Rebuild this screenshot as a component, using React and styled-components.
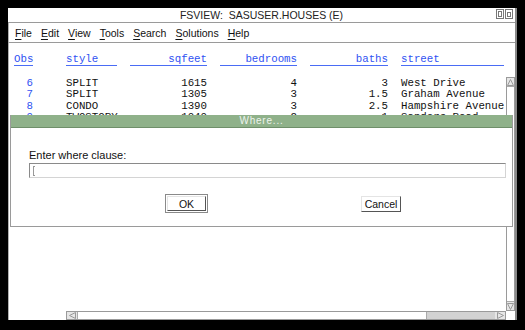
import styled, { createGlobalStyle } from 'styled-components';

const GlobalStyle = createGlobalStyle`
  html, body {
    margin: 0;
    padding: 0;
    background: #000;
  }
  * {
    box-sizing: border-box;
  }
`;

const columns = [
  { key: 'obs', label: 'Obs', align: 'right' },
  { key: 'style', label: 'style', align: 'left' },
  { key: 'sqfeet', label: 'sqfeet', align: 'right' },
  { key: 'bedrooms', label: 'bedrooms', align: 'right' },
  { key: 'baths', label: 'baths', align: 'right' },
  { key: 'street', label: 'street', align: 'left' },
];

const rows = [
  { obs: 6, style: 'SPLIT', sqfeet: 1615, bedrooms: 4, baths: '3', street: 'West Drive' },
  { obs: 7, style: 'SPLIT', sqfeet: 1305, bedrooms: 3, baths: '1.5', street: 'Graham Avenue' },
  { obs: 8, style: 'CONDO', sqfeet: 1390, bedrooms: 3, baths: '2.5', street: 'Hampshire Avenue' },
  { obs: 9, style: 'TWOSTORY', sqfeet: 1040, bedrooms: 2, baths: '1', street: 'Sanders Road' },
];

const menus = ['File', 'Edit', 'View', 'Tools', 'Search', 'Solutions', 'Help'];

const App = () => {
  return (
    <>
      <GlobalStyle />
      <Window>
        <TitleBar>
          <span />
          <TitleText>FSVIEW:&nbsp;&nbsp;SASUSER.HOUSES (E)</TitleText>
          <WinIcons>
            <svg width="17" height="10" viewBox="0 0 17 10">
              <rect x="0.5" y="0.5" width="7" height="9" fill="#fff" stroke="#777" />
              <rect x="2.5" y="2.5" width="3" height="5" fill="none" stroke="#777" />
              <rect x="9.5" y="0.5" width="7" height="9" fill="#fff" stroke="#777" />
              <rect x="11.5" y="3.5" width="3" height="4" fill="none" stroke="#777" />
            </svg>
          </WinIcons>
        </TitleBar>

        <MenuBar>
          {menus.map((m) => (
            <MenuItem key={m}>
              <u>{m[0]}</u>
              {m.slice(1)}
            </MenuItem>
          ))}
        </MenuBar>

        <Body>
          <Table>
            {columns.map((c) => (
              <HeadCell key={c.key} $align={c.align} $narrow={c.key === 'obs'}>
                {c.label}
              </HeadCell>
            ))}
            {rows.map((r) =>
              columns.map((c) => (
                <Cell
                  key={r.obs + c.key}
                  $align={c.align}
                  $narrow={c.key === 'obs'}
                  $blue={c.key === 'obs'}
                >
                  {r[c.key]}
                </Cell>
              ))
            )}
          </Table>

          <VScroll>
            <ArrowBox $side="top">
              <svg width="7" height="7" viewBox="0 0 7 7">
                <path d="M3.5 0.5 L6.5 6.5 L0.5 6.5 Z" fill="none" stroke="#999" />
              </svg>
            </ArrowBox>
            <ArrowBox $side="bottom">
              <svg width="7" height="7" viewBox="0 0 7 7">
                <path d="M0.5 0.5 L6.5 0.5 L3.5 6.5 Z" fill="none" stroke="#999" />
              </svg>
            </ArrowBox>
          </VScroll>

          <HScroll>
            <HArrow>
              <svg width="7" height="7" viewBox="0 0 7 7">
                <path d="M6.5 0.5 L6.5 6.5 L0.5 3.5 Z" fill="none" stroke="#999" />
              </svg>
            </HArrow>
            <Thumb />
            <Track />
            <HArrow>
              <svg width="7" height="7" viewBox="0 0 7 7">
                <path d="M0.5 0.5 L0.5 6.5 L6.5 3.5 Z" fill="none" stroke="#999" />
              </svg>
            </HArrow>
          </HScroll>
          <Corner />
        </Body>

        <Dialog>
          <DialogTitle>Where...</DialogTitle>
          <DialogBody>
            <Label>Enter where clause:</Label>
            <Input>
              <Caret />
            </Input>
            <ButtonRow>
              <DefaultFrame>
                <Button $w={39} $h={15}>OK</Button>
              </DefaultFrame>
              <Button $w={40} $h={16}>Cancel</Button>
            </ButtonRow>
          </DialogBody>
        </Dialog>
      </Window>
    </>
  );
};

export default App;

const Window = styled.div`
  position: relative;
  margin: 8px 0 0 8px;
  width: 509px;
  height: 312px;
  background: #fff;
  border-right: 2px solid #8a8a8a;
  display: flex;
  flex-direction: column;
  font-family: 'Liberation Sans', Arial, sans-serif;
  color: #111;
`;

const TitleBar = styled.div`
  height: 15px;
  border-bottom: 1px solid #9a9a9a;
  display: grid;
  grid-template-columns: 1fr auto 1fr;
  align-items: center;
  font-size: 10.5px;
`;

const TitleText = styled.span`
  color: #222;
  white-space: nowrap;
`;

const WinIcons = styled.span`
  justify-self: end;
  display: flex;
  padding-right: 2px;
  margin-top: -3px;
`;

const MenuBar = styled.div`
  height: 20px;
  border-bottom: 1px solid #9a9a9a;
  border-left: 1px solid #b0b0b0;
  display: flex;
  align-items: center;
  gap: 9px;
  padding-left: 6px;
  font-size: 10.5px;
`;

const MenuItem = styled.span`
  color: #111;
  u {
    text-underline-offset: 2px;
  }
`;

const Body = styled.div`
  flex: 1;
  display: grid;
  grid-template-columns: 1fr 9px;
  grid-template-rows: 1fr 9px;
  border-left: 1px solid #b0b0b0;
  min-height: 0;
`;

const Table = styled.div`
  display: grid;
  grid-template-columns: 39px 51px 77px 77px 78px 103px;
  grid-auto-rows: 11.5px;
  column-gap: 13px;
  align-content: start;
  padding: 11px 0 0 5px;
  font-family: 'Liberation Mono', 'Courier New', monospace;
  font-size: 10.75px;
  line-height: 11.5px;
  overflow: hidden;
`;

const HeadCell = styled.div`
  color: #2f52f2;
  text-align: ${(p) => p.$align};
  border-bottom: 1px solid #4a6cf5;
  height: 12px;
  width: ${(p) => (p.$narrow ? '19px' : 'auto')};
  white-space: nowrap;
`;

const Cell = styled.div`
  color: ${(p) => (p.$blue ? '#2f52f2' : '#111')};
  text-align: ${(p) => p.$align};
  width: ${(p) => (p.$narrow ? '19px' : 'auto')};
  white-space: nowrap;
  margin-top: 12px;
  margin-bottom: -12px;
`;

const VScroll = styled.div`
  grid-column: 2;
  grid-row: 1;
  margin-top: 34px;
  border: 1px solid #9a9a9a;
  background: #fff;
  display: flex;
  flex-direction: column;
  justify-content: space-between;
`;

const ArrowBox = styled.div`
  height: 9px;
  display: flex;
  align-items: center;
  justify-content: center;
  background: #e6e6e6;
  border-${(p) => (p.$side === 'top' ? 'bottom' : 'top')}: 1px solid #aaa;
`;

const HScroll = styled.div`
  grid-column: 1;
  grid-row: 2;
  margin-left: 57px;
  border: 1px solid #9a9a9a;
  display: flex;
`;

const HArrow = styled.div`
  width: 10px;
  display: flex;
  align-items: center;
  justify-content: center;
  background: #e6e6e6;
`;

const Thumb = styled.div`
  width: 350px;
  background: #fff;
  border-left: 1px solid #aaa;
  border-right: 1px solid #aaa;
`;

const Track = styled.div`
  flex: 1;
  background: #d2d2d2;
`;

const Corner = styled.div`
  grid-column: 2;
  grid-row: 2;
  background: #fff;
`;

const Dialog = styled.div`
  position: absolute;
  top: 107px;
  left: 2px;
  width: 503px;
  height: 112px;
  background: #fff;
  border: 1px solid #9a9a9a;
  border-top: none;
`;

const DialogTitle = styled.div`
  height: 13px;
  background: #8fb18a;
  border-bottom: 1px solid #6f8f6a;
  color: #eef4ee;
  font-size: 10px;
  letter-spacing: 0.8px;
  line-height: 12px;
  text-align: center;
`;

const DialogBody = styled.div`
  padding: 21px 6px 0 18px;
`;

const Label = styled.div`
  font-size: 11px;
  line-height: 13px;
  color: #111;
`;

const Input = styled.div`
  margin-top: 1px;
  height: 15px;
  border: 1px solid;
  border-color: #8a8a8a #d4d4d4 #d4d4d4 #8a8a8a;
  background: #fff;
  display: flex;
  align-items: center;
  padding-left: 3px;
`;

const Caret = styled.span`
  width: 2px;
  height: 10px;
  border: 1px solid #999;
  border-right: none;
`;

const ButtonRow = styled.div`
  display: flex;
  align-items: center;
  gap: 153px;
  margin-top: 16px;
  padding-left: 136px;
`;

const DefaultFrame = styled.div`
  border: 1px solid #8a8a8a;
  padding: 1px;
`;

const Button = styled.div`
  width: ${(p) => p.$w}px;
  height: ${(p) => p.$h}px;
  border: 1px solid;
  border-color: #e4e4e4 #555 #555 #e4e4e4;
  background: #fff;
  font-size: 10.5px;
  display: flex;
  align-items: center;
  justify-content: center;
  color: #111;
`;
